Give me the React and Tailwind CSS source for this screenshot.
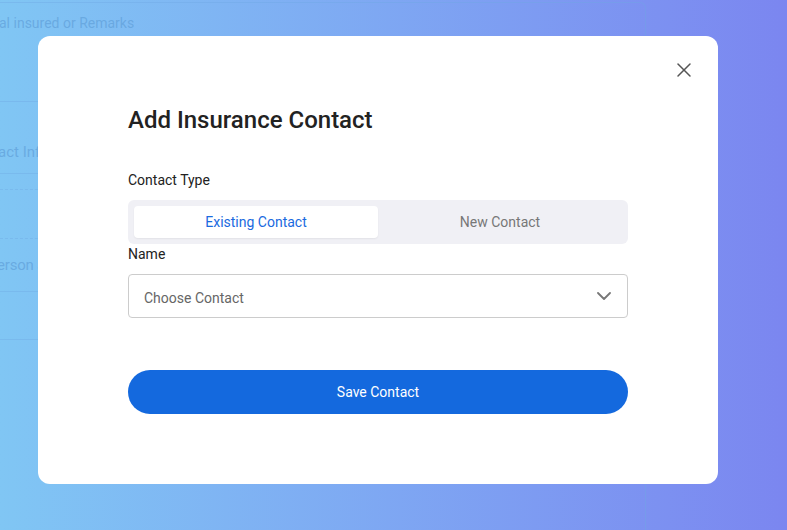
import React, { useState } from 'react';
import { X } from 'lucide-react';

const BackdropPage = () => (
    <div className="w-[646px] h-full flex flex-col text-[#5f9fd9]/70">
        {/* remarks textarea, cut off by the viewport */}
        <div className="mt-[2px] h-[100px] border border-[#6ea9e3]/40 rounded-r-md border-l-0 pt-[10px] text-sm">
            <span className="-ml-[1px]">al insured or Remarks</span>
        </div>
        <div className="h-[71px] flex items-end pb-[10px] text-[15px]">
            <span className="-ml-[2px]">act Info</span>
        </div>
        <div className="border-t border-[#6ea9e3]/40 h-[16px]" />
        <div className="border-t border-dashed border-[#6ea9e3]/40 h-[49px]" />
        <div className="border-t border-dashed border-[#6ea9e3]/40 h-[53px] flex items-center text-[15px] tracking-[-0.2px]">
            <span className="-ml-[3px] pt-[1px]">erson and</span>
        </div>
        <div className="border-t border-[#6ea9e3]/40 h-[48px]" />
        <div className="border-t border-[#6ea9e3]/40 h-[96px]" />
        <div className="flex-1 border-r border-[#6ea9e3]/40" />
    </div>
);

const Chevron = () => (
    <svg width="14" height="8" viewBox="0 0 14 8" fill="none">
        <path d="M1 1l6 6 6-6" stroke="#777" strokeWidth="1.8" strokeLinecap="round" strokeLinejoin="round" />
    </svg>
);

const ContactModal = () => {
    const [tab, setTab] = useState('existing');

    return (
        <div className="absolute left-[38px] top-[36px] w-[680px] h-[448px] bg-white rounded-xl px-[90px] pt-[68px]">
            <button className="absolute right-[22px] top-[22px] text-[#555]">
                <X size={24} strokeWidth={1.5} />
            </button>

            <h2 className="text-[24px] leading-8 font-medium text-[#222]">Add Insurance Contact</h2>

            <div className="mt-[34px] text-sm leading-5 text-[#222]">Contact Type</div>
            <div className="mt-[10px] h-[44px] bg-[#f0f0f5] rounded-md p-[6px] grid grid-cols-2 text-sm">
                <button
                    onClick={() => setTab('existing')}
                    className={`rounded ${tab === 'existing' ? 'bg-white text-[#1a6ae0] shadow-[0_1px_2px_rgba(0,0,0,0.06)]' : 'text-[#777]'}`}
                >
                    Existing Contact
                </button>
                <button
                    onClick={() => setTab('new')}
                    className={`rounded ${tab === 'new' ? 'bg-white text-[#1a6ae0] shadow-[0_1px_2px_rgba(0,0,0,0.06)]' : 'text-[#777]'}`}
                >
                    New Contact
                </button>
            </div>

            <div className="text-sm leading-5 text-[#222]">Name</div>
            <div className="mt-[10px] h-[44px] border border-[#ccc] rounded flex items-center justify-between pl-[15px] pr-[16px] text-sm text-[#666]">
                <span className="pt-[3px]">Choose Contact</span>
                <Chevron />
            </div>

            <button className="mt-[52px] w-full h-[44px] rounded-full bg-[#1469de] text-white text-sm">
                Save Contact
            </button>
        </div>
    );
};

export default function App() {
    return (
        <div
            className="relative w-[787px] h-[530px] overflow-hidden bg-linear-to-r from-[#80c6f4] to-[#7b86f0]"
            style={{ fontFamily: 'Roboto, "Liberation Sans", sans-serif' }}
        >
            <BackdropPage />
            <ContactModal />
        </div>
    );
}
